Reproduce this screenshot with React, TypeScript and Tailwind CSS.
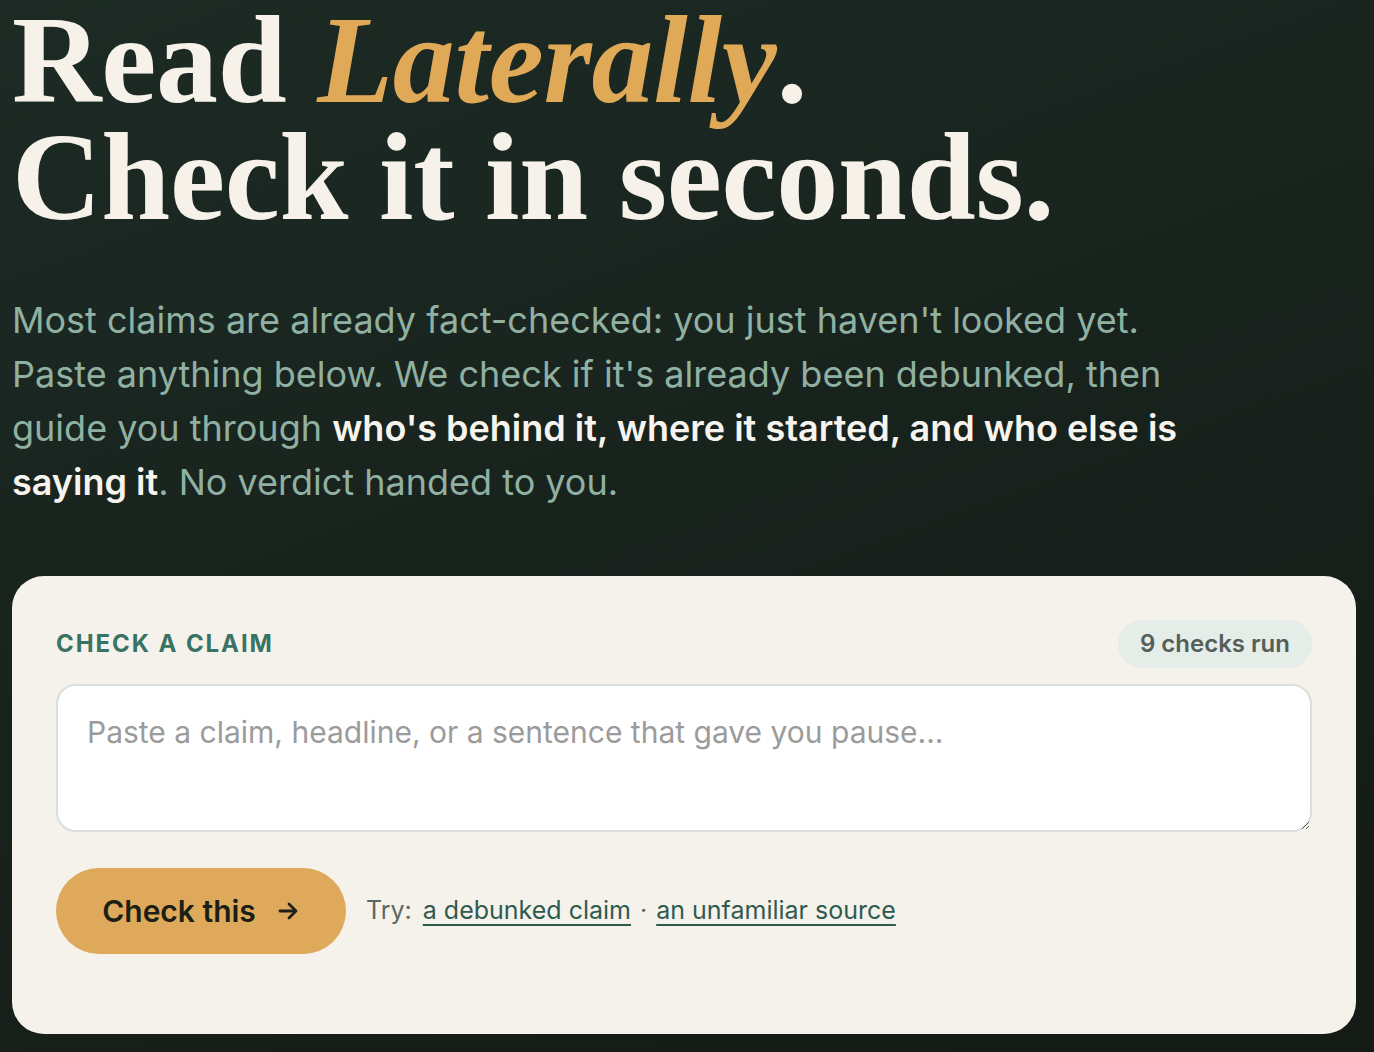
import React from "react";

export default function App() {
  return (
    <div className="min-h-[1052px] w-full bg-[linear-gradient(160deg,#1d2b25_0%,#18221d_50%,#141a16_100%)] overflow-hidden">
      <div className="pl-[12px] pr-[18px] pt-[2px]">
        <h1
          className="text-[124px] leading-[117px] font-bold tracking-[-0.002em] text-[#f6f2ea]"
          style={{ fontFamily: '"Liberation Serif", "DejaVu Serif", serif' }}
        >
          <span>Read </span>
          <span className="italic text-[#e0a957]">Laterally</span>
          <span>.</span>
          <br />
          <span>Check it in seconds.</span>
        </h1>
        <p
          className="mt-[57px] max-w-[1190px] text-[36px] leading-[54px] text-[#90b1a2]"
          style={{ fontFamily: 'Inter, "Noto Sans", sans-serif' }}
        >
          Most claims are already fact-checked: you just haven't looked yet. Paste anything below. We check if it's already been debunked, then guide you through{" "}
          <span className="font-semibold text-[#f7f4ee]">who's behind it, where it started, and who else is saying it</span>
          . No verdict handed to you.
        </p>

        <div
          className="mt-[67px] rounded-[32px] bg-[#f5f2ec] px-[44px] pt-[44px] pb-[80px]"
          style={{ fontFamily: 'Inter, "Noto Sans", sans-serif' }}
        >
          <div className="flex items-center justify-between">
            <div className="text-[24px] font-bold tracking-[0.08em] text-[#3a7263]">CHECK A CLAIM</div>
            <div className="rounded-full bg-[#e5ede8] px-[22px] h-[48px] flex items-center text-[24px] font-semibold text-[#555f59]">
              9 checks run
            </div>
          </div>
          <textarea
            className="mt-[16px] block w-full h-[148px] rounded-[20px] border-2 border-[#d9dfda] bg-white px-[29px] pt-[26px] text-[30px] leading-[40px] text-[#333] placeholder:text-[#9b9b9b] outline-none"
            placeholder="Paste a claim, headline, or a sentence that gave you pause..."
          />
          <div className="mt-[36px] flex items-center">
            <button className="h-[86px] w-[290px] rounded-full bg-[#dfa95b] flex items-center justify-center gap-[20px] text-[30px] font-semibold text-[#1b1f16]">
              <span>Check this</span>
              <svg width="24" height="24" viewBox="0 0 24 24" fill="none" stroke="currentColor" strokeWidth="2.8" strokeLinecap="round" strokeLinejoin="round">
                <path d="M4 12h15" />
                <path d="M13 5l7 7-7 7" />
              </svg>
            </button>
            <div className="ml-[20px] flex items-center text-[25px] text-[#5d6761]">
              <span>Try:</span>
              <a className="ml-[11px] text-[#2f5b4f] underline decoration-2 underline-offset-[5px]" href="#">a debunked claim</a>
              <span className="mx-[9px]">·</span>
              <a className="text-[#2f5b4f] underline decoration-2 underline-offset-[5px]" href="#">an unfamiliar source</a>
            </div>
          </div>
        </div>
      </div>
    </div>
  );
}
